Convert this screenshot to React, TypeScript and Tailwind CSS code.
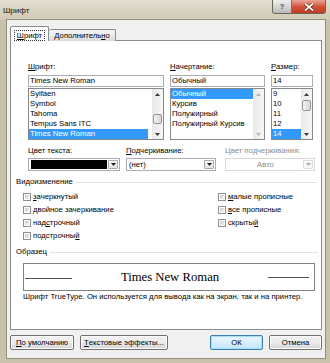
import React from "react";

function Acc({ t, i }: { t: string; i?: number }) {
  if (i === undefined || i < 0) return <>{t}</>;
  return (
    <>
      {t.slice(0, i)}
      <span className="underline decoration-[0.8px] underline-offset-[1px]">{t[i]}</span>
      {t.slice(i + 1)}
    </>
  );
}

function Arrow({ up, color }: { up?: boolean; color: string }) {
  return (
    <svg width="5" height="3" viewBox="0 0 5 3">
      <path d={up ? "M0 3L2.5 0L5 3Z" : "M0 0L5 0L2.5 3Z"} fill={color} />
    </svg>
  );
}

function VScroll({ spacer, thumb, disabled }: { spacer?: string; thumb?: string; disabled?: boolean }) {
  const c = disabled ? "#b8b8b8" : "#3a3a3a";
  return (
    <div className="flex w-[11px] flex-col bg-gradient-to-r from-[#e8e8e8] to-[#f6f6f6]">
      <div className="flex h-[10px] items-center justify-center">
        <Arrow up color={c} />
      </div>
      <div className="flex flex-1 flex-col">
        {spacer && <div className={spacer} />}
        {thumb && (
          <div
            className={`${thumb} mx-[1px] rounded-[2px] border border-[#969696] bg-gradient-to-r from-[#f4f4f4] to-[#d6d6d6]`}
          />
        )}
      </div>
      <div className="flex h-[10px] items-center justify-center">
        <Arrow color={c} />
      </div>
    </div>
  );
}

function ListBox({
  items,
  sel,
  spacer,
  thumb,
  disabled,
  hlw,
}: {
  items: string[];
  sel: number;
  spacer?: string;
  thumb?: string;
  disabled?: boolean;
  hlw: string;
}) {
  return (
    <div className="mt-[1px] flex h-[52px] border border-[#828790] bg-white">
      <div className="flex flex-1 flex-col">
        {items.map((it, i) => (
          <div key={i} className="flex h-[10px]">
            <div
              className={`${i === sel ? `bg-[#3399ff] text-white ${hlw}` : ""} h-[10px] whitespace-nowrap pl-[1px] leading-[10px]`}
            >
              {it}
            </div>
          </div>
        ))}
      </div>
      <VScroll spacer={spacer} thumb={thumb} disabled={disabled} />
    </div>
  );
}

function Check({ label, i }: { label: string; i?: number }) {
  return (
    <div className="flex h-[13px] items-center">
      <div className="h-[8px] w-[8px] border border-[#8f8f8f] bg-white p-[1px]">
        <div className="h-full w-full bg-gradient-to-br from-[#c9ccd1] to-[#f4f4f4]" />
      </div>
      <div className="ml-[2px] whitespace-nowrap leading-[10px]">
        <Acc t={label} i={i} />
      </div>
    </div>
  );
}

function DropBtn({ disabled }: { disabled?: boolean }) {
  return (
    <div
      className={`flex h-[9px] w-[10px] items-center justify-center rounded-[1px] border ${
        disabled ? "border-[#dcdcdc] bg-[#f7f7f7]" : "border-[#a9a9a9] bg-gradient-to-b from-[#fbfbfb] to-[#e4e4e4]"
      }`}
    >
      <Arrow color={disabled ? "#b0b0b0" : "#222"} />
    </div>
  );
}

function Btn({ children, w, focus }: { children: React.ReactNode; w: string; focus?: boolean }) {
  return (
    <div
      className={`${w} flex h-[15px] items-center justify-center rounded-[2px] border ${
        focus
          ? "border-[#3c7fb1] bg-gradient-to-b from-[#eaf6fd] via-[#d9f0fc] to-[#bee6fd] shadow-[inset_0_0_0_1px_#a8def8]"
          : "border-[#707070] bg-gradient-to-b from-[#f2f2f2] via-[#ebebeb] to-[#d4d4d4] shadow-[inset_0_0_0_1px_#fcfcfc]"
      } whitespace-nowrap leading-[10px]`}
    >
      {children}
    </div>
  );
}

export default function App() {
  return (
    <div className="flex h-[363px] w-[330px] flex-col overflow-hidden bg-[#c8c1ab] font-['Liberation_Sans',Arial,sans-serif] text-[7.7px] leading-[10px] text-black">
      {/* title bar */}
      <div className="flex h-[20px] items-start bg-gradient-to-b from-[#e2ded1] to-[#d0c9b5]">
        <div className="pl-[3px] pt-[6px] text-[8px] leading-[10px] text-[#111]">Шрифт</div>
        <div className="ml-auto mr-[4px] flex h-[14px] overflow-hidden rounded-b-[3px] border border-t-0 border-[#6a6558]">
          <div className="flex w-[19px] items-center justify-center border-r border-[#7a766b] bg-gradient-to-b from-[#eeeeee] via-[#d6d6d6] to-[#b9b9b9] text-[8px] font-bold leading-[10px] text-[#555]">
            ?
          </div>
          <div className="flex w-[33px] items-center justify-center bg-gradient-to-b from-[#e9a898] via-[#d1543c] to-[#c23a20]">
            <svg width="10" height="8" viewBox="0 0 10 8">
              <path d="M1 0.5L9 7.5M9 0.5L1 7.5" stroke="#5a1a10" strokeWidth="3" />
              <path d="M1 0.5L9 7.5M9 0.5L1 7.5" stroke="#ffffff" strokeWidth="1.8" />
            </svg>
          </div>
        </div>
      </div>

      {/* client */}
      <div className="ml-[7px] flex h-[338px] w-[318px] flex-col bg-[#f0f0f0] px-[3px] pt-[6px] shadow-[0_0_0_1px_#948e7c]">
        {/* tabs */}
        <div className="relative z-10 -mb-px flex items-end">
          <div className="flex h-[15px] w-[39px] items-start justify-center rounded-t-[2px] border border-b-0 border-[#898c95] bg-white pt-[3px]">
            <div className="border border-dotted border-[#333] px-[2px] leading-[9px]">
              <Acc t="Шрифт" i={0} />
            </div>
          </div>
          <div className="flex h-[12px] w-[67px] items-center justify-center rounded-t-[2px] border border-b-0 border-l-0 border-[#898c95] bg-gradient-to-b from-[#f3f3f3] via-[#ebebeb] to-[#d9d9d9] leading-[10px]">
            <Acc t="Дополнительно" i={11} />
          </div>
        </div>

        {/* panel */}
        <div className="flex h-[290px] flex-col border border-[#898c95] bg-white pt-[21px]">
          <div className="flex gap-[6px] pl-[17px]">
            <div className="flex w-[136px] flex-col">
              <div className="h-[10px]">
                <Acc t="Шрифт:" i={0} />
              </div>
              <div className="mt-[3px] h-[12px] border border-[#abadb3] pl-[1px] leading-[10px]">Times New Roman</div>
              <ListBox
                items={["Sylfaen", "Symbol", "Tahoma", "Tempus Sans ITC", "Times New Roman"]}
                sel={4}
                spacer="h-[15px]"
                thumb="h-[10px]"
                hlw="w-[119px]"
              />
            </div>
            <div className="flex w-[95px] flex-col">
              <div className="h-[10px]">
                <Acc t="Начертание:" i={0} />
              </div>
              <div className="mt-[3px] h-[12px] border border-[#abadb3] pl-[1px] leading-[10px]">Обычный</div>
              <ListBox
                items={["Обычный", "Курсив", "Полужирный", "Полужирный Курсив"]}
                sel={0}
                disabled
                hlw="w-[82px]"
              />
            </div>
            <div className="flex w-[42px] flex-col">
              <div className="h-[10px]">
                <Acc t="Размер:" i={0} />
              </div>
              <div className="mt-[3px] h-[12px] border border-[#abadb3] pl-[1px] leading-[10px]">14</div>
              <ListBox
                items={["9", "10", "11", "12", "14"]}
                sel={4}
                spacer="h-[1px]"
                thumb="h-[11px]"
                hlw="w-[29px]"
              />
            </div>
          </div>

          {/* colour row */}
          <div className="mt-[6px] flex pl-[17px]">
            <div className="flex w-[92px] flex-col">
              <div className="h-[10px]">Цвет текста:</div>
              <div className="mt-[2px] flex h-[13px] items-center border border-[#abadb3] bg-white pl-[2px] pr-[1px]">
                <div className="h-[9px] flex-1 bg-black" />
                <div className="ml-[1px]">
                  <DropBtn />
                </div>
              </div>
            </div>
            <div className="ml-[6px] flex w-[90px] flex-col">
              <div className="h-[10px]">
                <Acc t="Подчеркивание:" i={0} />
              </div>
              <div className="mt-[2px] flex h-[13px] items-center border border-[#abadb3] bg-white pl-[2px] pr-[1px]">
                <div className="flex-1 leading-[10px]">(нет)</div>
                <DropBtn />
              </div>
            </div>
            <div className="ml-[9px] flex w-[90px] flex-col text-[#8d8d8d]">
              <div className="h-[10px]">Цвет подчеркивания:</div>
              <div className="mt-[2px] flex h-[13px] items-center border border-[#d9d9d9] bg-white pl-[2px] pr-[1px]">
                <div className="flex-1 text-center leading-[10px]">Авто</div>
                <DropBtn disabled />
              </div>
            </div>
          </div>

          {/* effects */}
          <div className="mt-[6px] flex h-[10px] items-center pl-[5px] pr-[4px]">
            <div className="whitespace-nowrap">Видоизменение</div>
            <div className="ml-[3px] h-px flex-1 bg-[#dde3e8]" />
          </div>
          <div className="mt-[3px] flex">
            <div className="flex w-[207px] flex-col pl-[12px]">
              <Check label="зачеркнутый" i={0} />
              <Check label="двойное зачеркивание" />
              <Check label="надстрочный" i={3} />
              <Check label="подстрочный" i={10} />
            </div>
            <div className="flex flex-col">
              <Check label="малые прописные" i={0} />
              <Check label="все прописные" i={0} />
              <Check label="скрытый" i={6} />
            </div>
          </div>

          {/* sample */}
          <div className="mt-[5px] flex h-[10px] items-center pl-[5px] pr-[3px]">
            <div className="whitespace-nowrap">Образец</div>
            <div className="ml-[3px] h-px flex-1 bg-[#dde3e8]" />
          </div>
          <div className="ml-[12px] mt-[6px] flex h-[28px] w-[292px] items-center border border-[#828282] bg-white pl-[1px] pr-[5px]">
            <div className="mt-[3px] h-px w-[47px] bg-[#505050]" />
            <div className="flex-1 text-center font-['Liberation_Serif','Times_New_Roman',serif] text-[12.7px] leading-[14px]">
              Times New Roman
            </div>
            <div className="mt-[1px] h-px w-[41px] bg-[#505050]" />
          </div>
          <div className="ml-[12px] mt-[1px] h-[10px] whitespace-nowrap">
            Шрифт TrueType. Он используется для вывода как на экран, так и на принтер.
          </div>
        </div>

        {/* buttons */}
        <div className="mt-[5px] flex">
          <Btn w="w-[64px]">
            <Acc t="По умолчанию" i={0} />
          </Btn>
          <div className="ml-[6px]">
            <Btn w="w-[88px]">
              <Acc t="Текстовые эффекты..." i={0} />
            </Btn>
          </div>
          <div className="ml-auto">
            <Btn w="w-[53px]" focus>
              ОК
            </Btn>
          </div>
          <div className="ml-[6px]">
            <Btn w="w-[53px]">Отмена</Btn>
          </div>
        </div>
      </div>
    </div>
  );
}
